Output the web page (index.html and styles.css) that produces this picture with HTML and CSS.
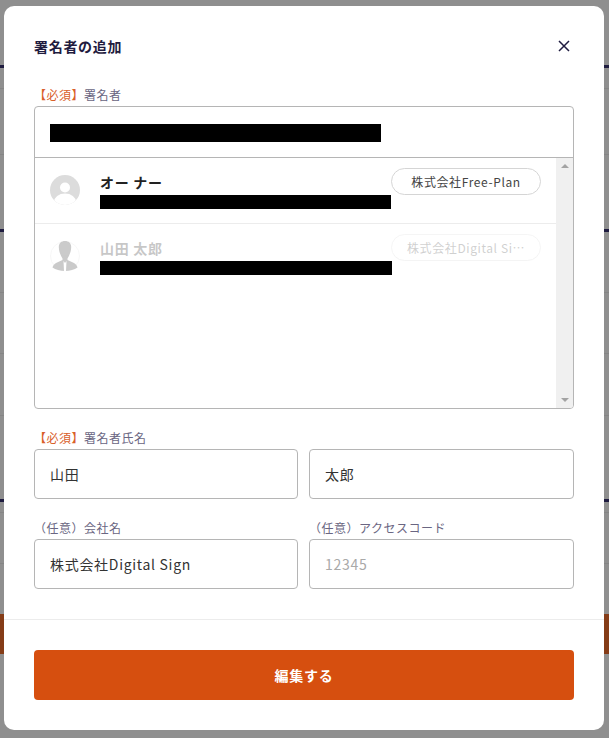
FILE: index.html
```html
<!DOCTYPE html>
<html lang="ja">
<head>
  <meta charset="UTF-8">
  <title>署名者の追加</title>
  <link rel="stylesheet" href="styles.css">
</head>
<body>
<!-- 背面のページ -->
<div class="backdrop">
  <div class="stripe dark s1"></div>
  <div class="stripe s2"></div>
  <div class="stripe s3"></div>
  <div class="stripe dark s4"></div>
  <div class="stripe s5"></div>
  <div class="stripe s6"></div>
  <div class="stripe s7"></div>
  <div class="stripe dark s8"></div>
  <div class="stripe s9"></div>
  <div class="stripe s10"></div>
  <div class="stripe brown"></div>
</div>

<div class="modal">
  <div class="modal-head">
    <h1 class="modal-title">署名者の追加</h1>
    <svg class="close-icon" width="12" height="12" viewBox="0 0 12 12">
      <path d="M1 1 L11 11 M11 1 L1 11" stroke="#1f1c40" stroke-width="1.5" fill="none"></path>
    </svg>
  </div>

  <div class="modal-body">
    <label class="field-label"><span class="required">【必須】</span>署名者</label>
    <div class="signer-box">
      <div class="search-row">
        <div class="redact search-redact"></div>
      </div>
      <div class="list-wrap">
        <div class="signer-list">
          <div class="signer-row">
            <svg class="avatar" width="30" height="30" viewBox="0 0 30 30">
              <defs>
                <clipPath id="clip-owner"><circle cx="15" cy="15" r="15"></circle></clipPath>
              </defs>
              <circle cx="15" cy="15" r="15" fill="#dcdcdc"></circle>
              <circle cx="15" cy="12.5" r="5" fill="#fff"></circle>
              <ellipse cx="15" cy="27" rx="11" ry="8.5" fill="#fff" clip-path="url(#clip-owner)"></ellipse>
            </svg>
            <div class="signer-info">
              <div class="signer-name">オー ナー</div>
              <div class="redact mail-redact"></div>
            </div>
            <div class="company-pill">株式会社Free-Plan</div>
          </div>
          <div class="signer-row is-disabled">
            <svg class="avatar" width="30" height="30" viewBox="0 0 30 30">
              <circle cx="15" cy="15" r="14.5" fill="#fff" stroke="#eee" stroke-width="1"></circle>
              <path d="M8.8 6 C8.8 2 11.5 0 15 0 C18.5 0 21.2 2 21.2 6 C21.200 11 19 15 17.500 17.500 L17.500 19 L24 22 C26 23 27 25 27.500 26.500 C24.500 28.800 20 30 15 30 C10 30 5.500 28.800 2.500 26.500 C3 25 4 23 6 22 L12.500 19 L12.500 17.500 C11 15 8.800 11 8.800 6 Z" fill="#8c8c8c"></path>
              <path d="M13.500 20 L15 22 L16.500 20 L16 30 L14 30 Z" fill="#fff"></path>
            </svg>
            <div class="signer-info">
              <div class="signer-name">山田 太郎</div>
              <div class="redact mail-redact long"></div>
            </div>
            <div class="company-pill">株式会社Digital Sign</div>
          </div>
        </div>
        <div class="scrollbar">
          <span class="arrow up"></span>
          <span class="arrow down"></span>
        </div>
      </div>
    </div>

    <label class="field-label"><span class="required">【必須】</span>署名者氏名</label>
    <div class="input-pair">
      <input class="text-input" type="text" value="山田">
      <input class="text-input" type="text" value="太郎">
    </div>

    <div class="input-pair label-pair">
      <label class="field-label">（任意）会社名</label>
      <label class="field-label">（任意）アクセスコード</label>
    </div>
    <div class="input-pair">
      <input class="text-input" type="text" value="株式会社Digital Sign">
      <input class="text-input" type="text" placeholder="12345">
    </div>
  </div>

  <div class="modal-foot">
    <button class="submit-button" type="button">編集する</button>
  </div>
</div>
</body>
</html>
```

FILE: styles.css
```css
* {
  box-sizing: border-box;
}
body {
  margin: 0;
  height: 738px;
  overflow: hidden;
  padding: 6px 5px 8px 4px;
  background-color: #8f8f8f;
  font-family: "Noto Sans CJK JP", "Noto Sans", sans-serif;
  color: #1f1c40;
}
/* 背面のページ */
.backdrop {
  position: absolute;
  top: 0;
  left: 0;
  width: 609px;
  height: 738px;
}
.stripe {
  position: absolute;
  left: 0;
  width: 100%;
  height: 1px;
  background-color: #858585;
}
.stripe.dark {
  height: 3px;
  background-color: #1f1c40;
}
.stripe.brown {
  top: 614px;
  height: 40px;
  background-color: #853c17;
}
.s1 { top: 65px; }
.s2 { top: 88px; }
.s3 { top: 154px; }
.s4 { top: 229px; }
.s5 { top: 292px; }
.s6 { top: 353px; }
.s7 { top: 415px; }
.s8 { top: 499px; }
.s9 { top: 512px; }
.s10 { top: 563px; }

.modal {
  position: relative;
  width: 600px;
  height: 724px;
  background-color: #fff;
  border-radius: 10px;
}
.modal-head {
  display: flex;
  justify-content: space-between;
  align-items: center;
  height: 80px;
  padding: 0 34px 0 30px;
}
.modal-title {
  margin: 0;
  font-size: 14px;
  font-weight: 700;
  letter-spacing: 0.05em;
}
.modal-body {
  padding: 0 30px;
  height: 534px;
  border-bottom: 1px solid #ececec;
}
.field-label {
  display: block;
  height: 20px;
  line-height: 17px;
  font-size: 12px;
  letter-spacing: 0.5px;
  color: #6a6682;
}
.required {
  color: #d9602a;
}
.signer-box {
  height: 303px;
  border: 1px solid #b5b5b5;
  border-radius: 4px;
  margin-bottom: 20px;
  overflow: hidden;
}
.search-row {
  height: 51px;
  padding: 17px 15px 0;
  border-bottom: 1px solid #b5b5b5;
}
.redact {
  background-color: #000;
}
.search-redact {
  width: 331px;
  height: 18px;
}
.list-wrap {
  display: flex;
  height: 250px;
}
.signer-list {
  flex: 1;
}
.signer-row {
  display: flex;
  height: 66px;
  padding: 10px 15px 0;
  border-bottom: 1px solid #ececec;
}
.signer-row.is-disabled {
  border-bottom: none;
}
.is-disabled .avatar {
  opacity: 0.45;
}
.is-disabled .company-pill {
  opacity: 0.25;
}
.is-disabled .signer-name {
  opacity: 0.25;
}
.avatar {
  flex: none;
  margin: 7px 20px 0 0;
}
.signer-info {
  width: 291px;
  flex: none;
}
.signer-name {
  height: 20px;
  margin-top: 4px;
  line-height: 20px;
  font-size: 14px;
  font-weight: 700;
  letter-spacing: 0.05em;
  color: #222;
}
.mail-redact {
  height: 14px;
  margin-top: 3px;
}
.mail-redact.long {
  width: 292px;
}
.company-pill {
  flex: none;
  width: 150px;
  height: 27px;
  padding: 0 15px;
  border: 1px solid #d5d5d5;
  border-radius: 14px;
  line-height: 25px;
  font-size: 12px;
  letter-spacing: 0.05em;
  text-align: center;
  white-space: nowrap;
  overflow: hidden;
  text-overflow: ellipsis;
  color: #444;
}
.scrollbar {
  display: flex;
  flex: none;
  flex-direction: column;
  justify-content: space-between;
  align-items: center;
  width: 17px;
  padding: 6px 0;
  background-color: #f0f0f0;
}
.arrow {
  width: 0;
  height: 0;
  border-left: 4px solid transparent;
  border-right: 4px solid transparent;
}
.arrow.up {
  border-bottom: 4px solid #a3a3a3;
}
.arrow.down {
  border-top: 4px solid #a3a3a3;
}
.input-pair {
  display: grid;
  grid-template-columns: 264px 265px;
  column-gap: 11px;
}
.label-pair {
  margin-top: 20px;
}
.text-input {
  display: block;
  width: 100%;
  height: 50px;
  padding: 0 15px;
  border: 1px solid #b5b5b5;
  border-radius: 4px;
  outline: none;
  background-color: #fff;
  font-family: inherit;
  font-size: 14px;
  letter-spacing: 0.05em;
  color: #333;
}
.text-input::placeholder {
  color: #a9a9a9;
  opacity: 1;
}
.modal-foot {
  padding: 30px;
}
.submit-button {
  display: block;
  width: 100%;
  height: 50px;
  border: none;
  border-radius: 4px;
  background-color: #d64f0f;
  font-family: inherit;
  font-size: 14px;
  font-weight: 700;
  letter-spacing: 0.05em;
  color: #fff;
}
```
